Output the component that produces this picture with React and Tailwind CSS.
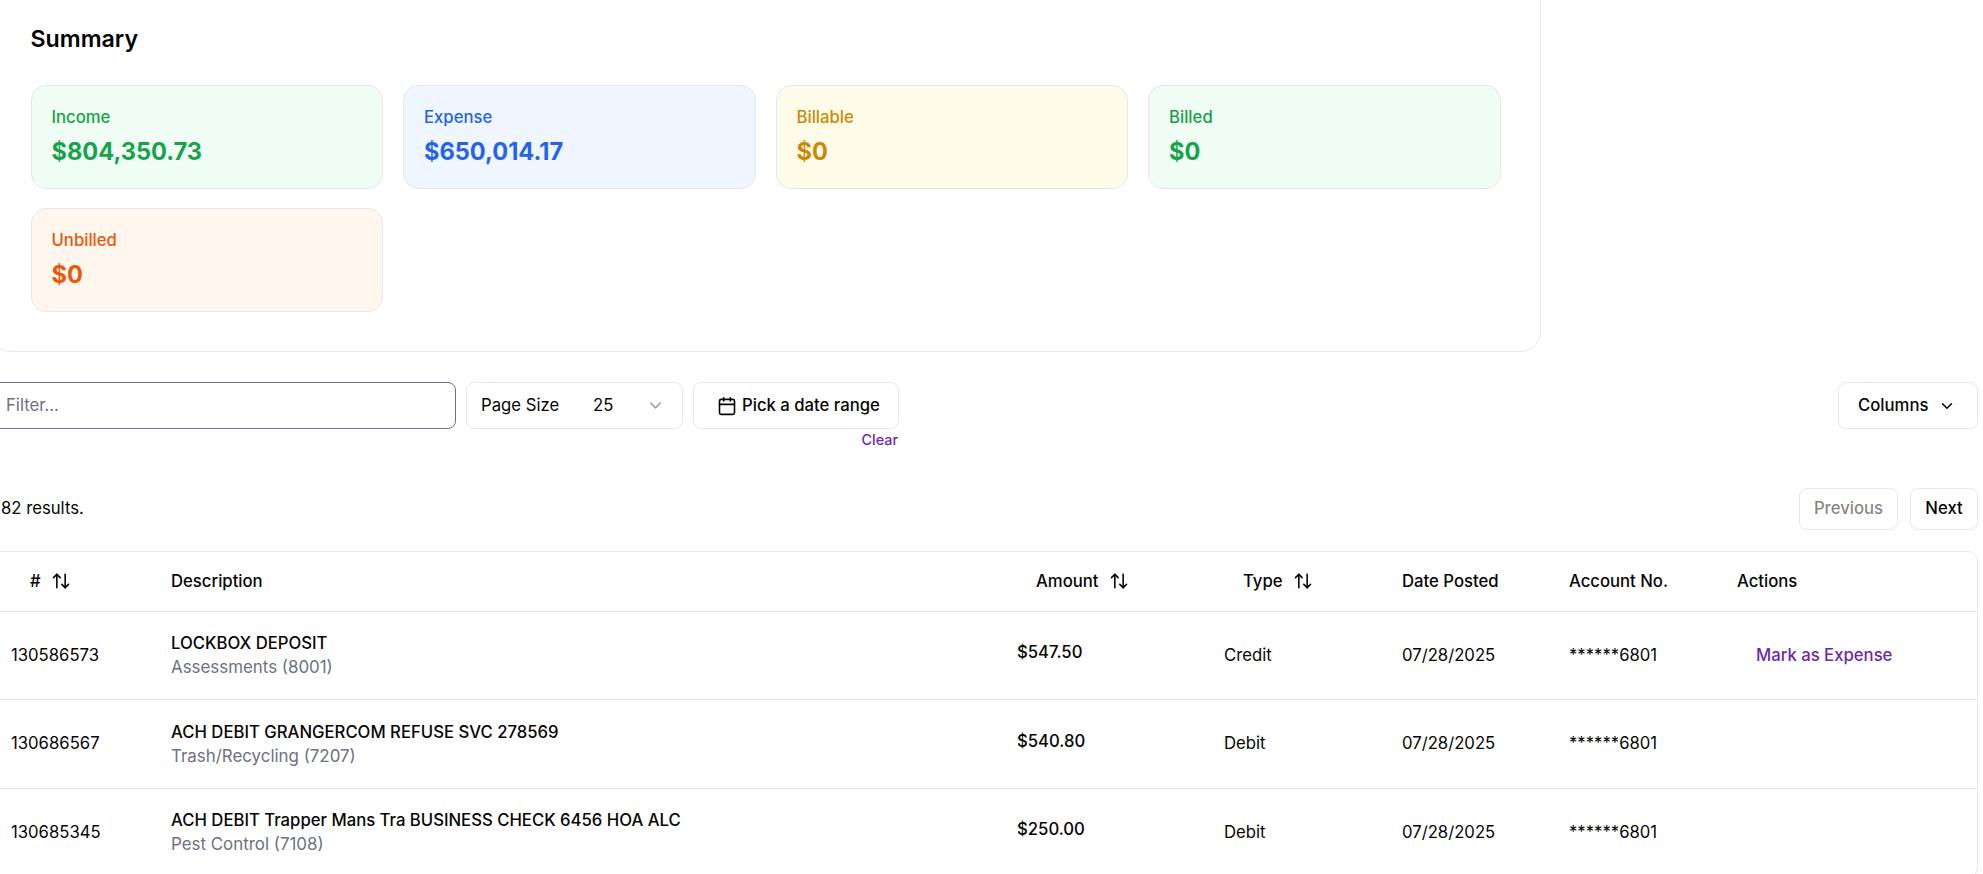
import React from 'react'
import { ArrowUpDown, Calendar, ChevronDown } from 'lucide-react'

const CARDS = [
  { label: 'Income', value: '$804,350.73', cls: 'bg-[#f0fdf4] text-[#16a34a]' },
  { label: 'Expense', value: '$650,014.17', cls: 'bg-[#eff6ff] text-[#2563eb]' },
  { label: 'Billable', value: '$0', cls: 'bg-[#fefce8] text-[#ca8a04]' },
  { label: 'Billed', value: '$0', cls: 'bg-[#f0fdf4] text-[#16a34a]' },
  { label: 'Unbilled', value: '$0', cls: 'bg-[#fff7ed] text-[#ea580c]' },
]

const ROWS = [
  { id: '130586573', desc: 'LOCKBOX DEPOSIT', cat: 'Assessments (8001)', amount: '$547.50', type: 'Credit', action: true },
  { id: '130686567', desc: 'ACH DEBIT GRANGERCOM REFUSE SVC 278569', cat: 'Trash/Recycling (7207)', amount: '$540.80', type: 'Debit' },
  { id: '130685345', desc: 'ACH DEBIT Trapper Mans Tra BUSINESS CHECK 6456 HOA ALC', cat: 'Pest Control (7108)', amount: '$250.00', type: 'Debit' },
]

function SortHead({ label }) {
  return (
    <span className="inline-flex items-center pl-[19px] gap-[10px]">
      {label}
      <ArrowUpDown size={20} strokeWidth={1.9} />
    </span>
  )
}

export default function App() {
  return (
    <div className="w-[1983px] h-[874px] overflow-hidden bg-white text-[16.7px] text-[#050505] font-[Inter,sans-serif]">
      <div className="-ml-[9px] w-[1987px]">
        <section className="-mt-[30px] w-[1550px] h-[382px] rounded-[20px] border border-[#e5e7eb] pl-[38.5px] pr-[39.5px] pt-[53px]">
          <h2 className="text-[23.2px] leading-[30px] font-semibold text-black">Summary</h2>
          <div className="mt-[31px] grid grid-cols-4 gap-x-5 gap-y-[19px]">
            {CARDS.map(c => (
              <div key={c.label} className={`h-[104px] rounded-[15px] border-[1.5px] border-[#e5e7eb] pl-[20px] pt-[19px] ${c.cls}`}>
                <p className="leading-[24px] font-medium">{c.label}</p>
                <p className="mt-[7px] text-[23.6px] leading-[32px] font-bold">{c.value}</p>
              </div>
            ))}
          </div>
        </section>

        <div className="mt-[30px] flex items-start gap-[10px]">
          <div className="flex items-center w-[465px] h-[47px] rounded-[8px] border-[1.5px] border-[#6b7280] pl-[14px] text-[#6b7280]">Filter...</div>
          <div className="flex items-center w-[217px] h-[47px] rounded-[8px] border border-[#e5e7eb] pl-[14px]">
            <span className="w-[112px]">Page Size</span>
            <span>25</span>
            <ChevronDown size={19} className="ml-[33px] text-[#9ca3af]" />
          </div>
          <div className="flex flex-col items-end">
            <div className="flex items-center w-[206px] h-[47px] rounded-[8px] border border-[#e5e7eb] pl-[23px] gap-[5px] font-medium">
              <Calendar size={20} strokeWidth={1.9} />
              Pick a date range
            </div>
            <button className="mt-[1px] mr-[1px] text-[14.4px] leading-[20px] font-medium text-[#6d28b0]">Clear</button>
          </div>
          <div className="ml-auto flex items-center w-[140px] h-[47px] rounded-[8px] border border-[#e5e7eb] pl-[19px] gap-[10px] font-medium">
            Columns
            <ChevronDown size={18} />
          </div>
        </div>

        <div className="mt-[38px] flex items-center h-[42px]">
          <span className="pl-[10px]">82 results.</span>
          <button className="ml-auto w-[99px] h-[42px] rounded-[8px] border border-[#e5e7eb] font-medium text-[#050505]/50">Previous</button>
          <button className="ml-[12px] w-[68px] h-[42px] rounded-[8px] border border-[#e5e7eb] font-medium">Next</button>
        </div>

        <div className="mt-[21px] rounded-[10px] border border-[#e5e7eb]">
          <table className="w-full table-fixed border-collapse">
            <colgroup>
              <col className="w-[160px]" />
              <col className="w-[846px]" />
              <col className="w-[207px]" />
              <col className="w-[178px]" />
              <col className="w-[167px]" />
              <col className="w-[168px]" />
              <col className="w-[259px]" />
            </colgroup>
            <thead>
              <tr className="h-[59px] border-b border-[#e5e7eb] text-left">
                <th className="pl-[19px] font-medium"><SortHead label="#" /></th>
                <th className="pl-[19px] font-medium">Description</th>
                <th className="pl-[19px] font-medium"><SortHead label="Amount" /></th>
                <th className="pl-[19px] font-medium"><SortHead label="Type" /></th>
                <th className="pl-[19px] font-medium">Date Posted</th>
                <th className="pl-[19px] font-medium">Account No.</th>
                <th className="pl-[19px] font-medium">Actions</th>
              </tr>
            </thead>
            <tbody>
              {ROWS.map(r => (
                <tr key={r.id} className="h-[88.5px] border-b border-[#e5e7eb]">
                  <td className="pl-[19px]">{r.id}</td>
                  <td className="pl-[19px]">
                    <p className="leading-[24px] font-medium">{r.desc}</p>
                    <p className="leading-[24px] text-[16.9px] text-[#6b7280]">{r.cat}</p>
                  </td>
                  <td className="pl-[19px]"><span className="block mb-[5px] font-medium">{r.amount}</span></td>
                  <td className="pl-[19px]">{r.type}</td>
                  <td className="pl-[19px]">07/28/2025</td>
                  <td className="pl-[19px]">******6801</td>
                  <td className="pl-[38px]">
                    {r.action && <button className="font-medium text-[#6d28b0]">Mark as Expense</button>}
                  </td>
                </tr>
              ))}
            </tbody>
          </table>
        </div>
      </div>
    </div>
  )
}
